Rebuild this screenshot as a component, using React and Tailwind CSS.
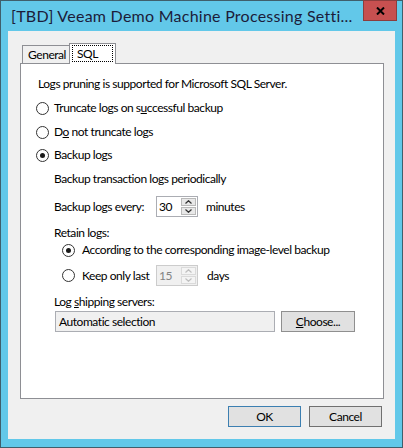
const font = "font-['Lato','Liberation_Sans',sans-serif]";

const Radio = ({ checked }) => (
  <span className="flex h-[13px] w-[13px] shrink-0 items-center justify-center rounded-full border border-[#333333] bg-white">
    {checked && <span className="h-[5px] w-[5px] rounded-full bg-[#1a1a1a]" />}
  </span>
);

const Arrow = ({ up, color }) => (
  <svg width="7" height="4" viewBox="0 0 7 4" fill="none" stroke={color} strokeWidth="1.2">
    {up ? <path d="M0.5 3.5 L3.5 0.7 L6.5 3.5" /> : <path d="M0.5 0.5 L3.5 3.3 L6.5 0.5" />}
  </svg>
);

const Spin = ({ value, disabled }) => (
  <div
    className={`flex h-[21px] w-[42px] shrink-0 border ${
      disabled ? 'border-[#cccccc] bg-[#f0f0f0] text-[#838383]' : 'border-[#abadb3] bg-white text-black'
    }`}
  >
    <div className="flex-1 pl-[2px] leading-[19px]">{value}</div>
    <div className="flex w-[16px] flex-col gap-px py-px pr-px">
      <div
        className={`flex flex-1 items-center justify-center border ${
          disabled ? 'border-[#dadada] bg-[#f4f4f4]' : 'border-[#b9b9b9] bg-[#e8e8e8]'
        }`}
      >
        <Arrow up color={disabled ? '#bfbfbf' : '#333333'} />
      </div>
      <div
        className={`flex flex-1 items-center justify-center border ${
          disabled ? 'border-[#dadada] bg-[#f4f4f4]' : 'border-[#b9b9b9] bg-[#e8e8e8]'
        }`}
      >
        <Arrow color={disabled ? '#bfbfbf' : '#333333'} />
      </div>
    </div>
  </div>
);

const App = () => {
  return (
    <div className={`flex h-[448px] w-[403px] flex-col bg-[#62c8e9] shadow-[inset_0_0_0_1px_#3f5f6c] ${font}`}>
      {/* title bar */}
      <div className="flex h-[31px] items-start">
        <div className="flex-1 overflow-hidden whitespace-nowrap pl-[11px] pt-[6px] text-[16px] leading-[20px] tracking-[0.25px] text-[#1c1c3a]">
          [TBD] Veeam Demo Machine Processing Setti...
        </div>
        <div className="mr-[6px] flex h-[21px] w-[34px] shrink-0 items-center justify-center border border-[#8c3d3d] bg-[#c75050]">
          <svg width="9" height="8" viewBox="0 0 9 8" stroke="#000" strokeWidth="2">
            <path d="M1 0.5 L8 7.5 M8 0.5 L1 7.5" />
          </svg>
        </div>
      </div>

      {/* client area */}
      <div className="ml-[8px] h-[408px] w-[387px] bg-[#f0f0f0] pl-[12px] pt-[12px] text-[12px] leading-[16px] tracking-[-0.45px] text-black">
        {/* tabs */}
        <div className="flex h-[20px] items-end pl-[2px]">
          <div className="h-[18px] w-[47px] whitespace-nowrap border-l border-t border-[#8e8f94] bg-[#f0f0f0] pl-[5px] leading-[17px]">
            General
          </div>
          <div className="relative z-10 -mb-px h-[21px] w-[47px] border-l border-r border-t border-[#8e8f94] bg-white pl-[2px] pt-px">
            <div className="h-[17px] w-[41px] border border-dotted border-black pl-[4px] leading-[15px]">SQL</div>
          </div>
        </div>

        {/* panel */}
        <div className="h-[336px] w-[364px] whitespace-nowrap border border-[#8e8f94] bg-white pl-[15px] pt-[12px]">
          <div className="pl-[2px]">Logs pruning is supported for Microsoft SQL Server.</div>

          <div className="mt-[8px] flex items-center gap-[5px]">
            <Radio />
            <span>
              Truncate logs on s<span className="underline">u</span>ccessful backup
            </span>
          </div>
          <div className="mt-[8px] flex items-center gap-[5px]">
            <Radio />
            <span>
              D<span className="underline">o</span> not truncate logs
            </span>
          </div>
          <div className="mt-[7px] flex items-center gap-[5px]">
            <Radio checked />
            <span>Backup logs</span>
          </div>

          <div className="ml-[18px]">
            <div className="mt-[8px]">Backup transaction logs periodically</div>
            <div className="mt-[9px] flex items-center">
              <span className="w-[102px] shrink-0">Backup logs every:</span>
              <Spin value="30" />
              <span className="ml-[8px]">minutes</span>
            </div>
            <div className="mt-[8px]">Retain logs:</div>
            <div className="ml-[8px] mt-px flex items-center">
              <Radio checked />
              <span className="ml-[7px]">According to the corresponding image-level backup</span>
            </div>
            <div className="ml-[8px] mt-[7px] flex items-center">
              <Radio />
              <span className="ml-[7px] w-[74px] shrink-0">Keep only last</span>
              <Spin value="15" disabled />
              <span className="ml-[9px]">days</span>
            </div>
            <div className="mt-[8px]">
              Log <span className="underline">s</span>hipping servers:
            </div>
            <div className="ml-px mt-px flex gap-[6px]">
              <div className="h-[21px] w-[220px] border border-[#abadb3] bg-[#f0f0f0] pl-[3px] leading-[19px]">
                Automatic selection
              </div>
              <div className="flex h-[21px] w-[74px] items-center justify-center border border-[#8f8f8f] bg-[#e1e1e1]">
                <span>
                  <span className="underline">C</span>hoose...
                </span>
              </div>
            </div>
          </div>
        </div>

        {/* footer buttons */}
        <div className="mt-[7px] flex justify-end gap-[8px] pr-[13px]">
          <div className="flex h-[21px] w-[73px] items-center justify-center border border-[#3c7fb1] bg-[#e1e1e1]">OK</div>
          <div className="flex h-[21px] w-[73px] items-center justify-center border border-[#707070] bg-[#e1e1e1]">
            Cancel
          </div>
        </div>
      </div>
    </div>
  );
};

export default App;
